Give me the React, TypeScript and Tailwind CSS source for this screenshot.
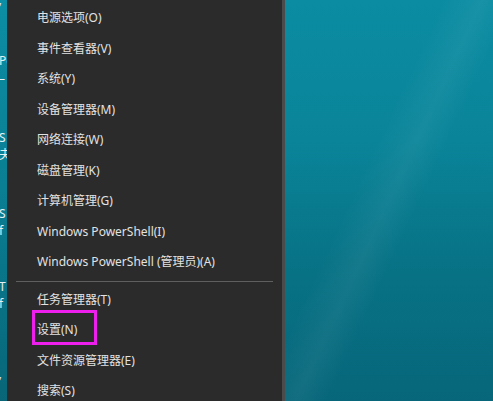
import React from 'react';

type Item = { label: string; boxed?: boolean };

const topItems: Item[] = [
  { label: '电源选项(O)' },
  { label: '事件查看器(V)' },
  { label: '系统(Y)' },
  { label: '设备管理器(M)' },
  { label: '网络连接(W)' },
  { label: '磁盘管理(K)' },
  { label: '计算机管理(G)' },
  { label: 'Windows PowerShell(I)' },
  { label: 'Windows PowerShell (管理员)(A)' },
];

const bottomItems: Item[] = [
  { label: '任务管理器(T)' },
  { label: '设置(N)', boxed: true },
  { label: '文件资源管理器(E)' },
  { label: '搜索(S)' },
];

// bits of desktop icon labels peeking out left of the menu
const strayLabels = [
  { text: '\u2019', top: 2 },
  { text: 'Po', top: 55 },
  { text: '\u2013', top: 73 },
  { text: 'S', top: 132 },
  { text: '夫', top: 149 },
  { text: 'S', top: 208 },
  { text: 'f', top: 225 },
  { text: 'T', top: 281 },
  { text: 'f', top: 298 },
  { text: '\u2019', top: 376 },
];

function MenuRow({ item }: { item: Item }) {
  return (
    <div className="relative flex h-[30.5px] items-center pl-[30px] text-[12px] text-[#e2e2e2]">
      <span className="whitespace-nowrap leading-none">{item.label}</span>
      {item.boxed && (
        <div className="absolute left-[25px] top-[-5px] h-[35px] w-[65px] border-[3px] border-[#ec1fec]" />
      )}
    </div>
  );
}

export default function App() {
  return (
    <div
      className="flex h-[401px] w-[493px] overflow-hidden"
      style={{ fontFamily: '"Noto Sans", "Noto Sans CJK SC", sans-serif' }}
    >
      <div className="relative w-[7px] shrink-0 overflow-hidden bg-[linear-gradient(180deg,#0c8ea4_0%,#0a7d92_50%,#086678_100%)]">
        {strayLabels.map((s, i) => (
          <span
            key={i}
            className="absolute left-[-1px] text-[12px] leading-none text-white/90"
            style={{ top: s.top }}
          >
            {s.text}
          </span>
        ))}
      </div>

      <div className="w-[278px] shrink-0 border-r-[3px] border-[#4b4b4b] bg-[#2b2b2b] pt-[3px]">
        {topItems.map((it) => (
          <MenuRow key={it.label} item={it} />
        ))}
        <div className="flex h-[7px] items-center px-[9px]">
          <div className="h-px w-full bg-[#5f5f5f]" />
        </div>
        {bottomItems.map((it) => (
          <MenuRow key={it.label} item={it} />
        ))}
      </div>

      <div className="flex-1 bg-[linear-gradient(180deg,#0b8ca2_0%,#0a8499_35%,#087386_65%,#07667a_100%)]">
        <div className="h-full w-full bg-[linear-gradient(115deg,transparent_40%,rgba(255,255,255,0.05)_50%,transparent_58%)]" />
      </div>
    </div>
  );
}
